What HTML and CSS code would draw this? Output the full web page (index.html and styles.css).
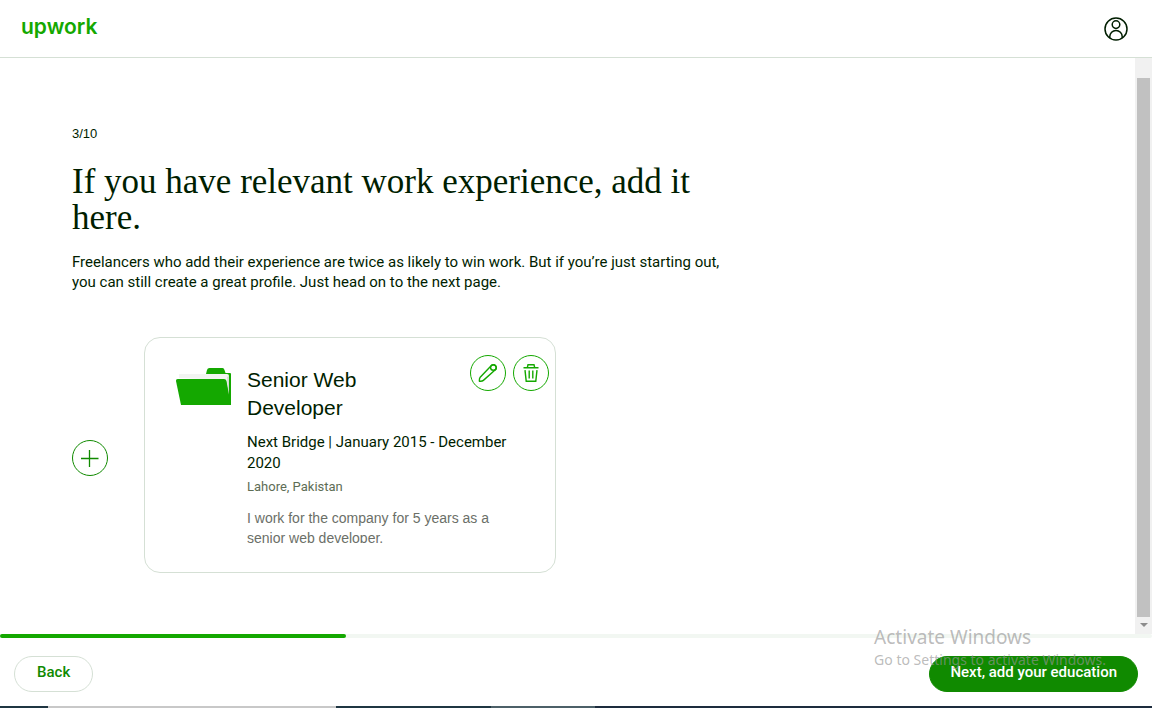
FILE: index.html
```html
<!DOCTYPE html>
<html lang="en">
<head>
<meta charset="utf-8">
<meta name="viewport" content="width=device-width, initial-scale=1">
<title>Work experience</title>
<link rel="stylesheet" href="styles.css">
</head>
<body>
<div class="app">
  <header class="topbar">
    <a class="logo" href="#">upwork</a>
    <button class="account" type="button" aria-label="Account">
      <svg viewBox="0 0 24 24" width="24" height="24" fill="none" stroke="currentColor" stroke-width="1.5">
        <circle cx="12" cy="12" r="11"/>
        <circle cx="12" cy="7.6" r="3.8"/>
        <path d="M5.8 20.8v-1.2a6.2 6.2 0 0 1 12.4 0v1.2"/>
      </svg>
    </button>
  </header>

  <div class="viewport">
    <main class="content">
      <p class="step">3/10</p>
      <h1 class="heading">If you have relevant work experience, add it here.</h1>
      <p class="intro">Freelancers who add their experience are twice as likely to win work. But if you’re just starting out, you can still create a great profile. Just head on to the next page.</p>

      <div class="experience">
        <button class="round add" type="button" aria-label="Add experience">
          <svg viewBox="0 0 18 18" width="18" height="18" stroke="currentColor" stroke-width="1.3"><path d="M8.500 1v17M0 9.500h17.500"/></svg>
        </button>
        <article class="card">
          <svg class="folder" viewBox="0 0 56 38" width="56" height="38">
            <path fill="#14a800" d="M30 6l1-4q.5-2 2.500-2h13q1.500 0 2 2l1 3h4.500q1 0 1 1v31H50z"/>
            <path fill="#f2f4f2" d="M3 6h48q2 0 2 2V31L50 12 3 10z"/>
            <path fill="#d5ddd5" d="M51 9l2-1v23z"/>
            <path fill="#14a800" d="M2 11h46q2 0 2.400 2L55 37H5L0 13q-.2-2 2-2z"/>
          </svg>
          <div class="details">
            <div class="card-head">
              <h2 class="title">Senior Web Developer</h2>
              <div class="actions">
                <button class="round" type="button" aria-label="Edit">
                  <svg viewBox="0 0 20 20" width="20" height="20" fill="none" stroke="currentColor" stroke-width="1.4" stroke-linejoin="round">
                    <path d="M2.200 14.200q-1 1.200-.8 4 2.600.4 4-.8L17.600 6.600a3 3 0 0 0-4.200-4.200z"/>
                    <circle cx="15.400" cy="4.500" r="2.800"/>
                  </svg>
                </button>
                <button class="round" type="button" aria-label="Delete">
                  <svg viewBox="0 0 20 20" width="20" height="20" fill="none" stroke="currentColor" stroke-width="1.4">
                    <path d="M2.500 4.700h15M6.300 4.700l.7-2.900h6l.7 2.900M4 7.200l1.200 11h9.600l1.200-11M8.200 7.500v8M11.800 7.500v8"/>
                  </svg>
                </button>
              </div>
            </div>
            <p class="meta">Next Bridge | January 2015 - December 2020</p>
            <p class="place">Lahore, Pakistan</p>
            <p class="summary">I work for the company for 5 years as a senior web developer.</p>
          </div>
        </article>
      </div>
    </main>
    <div class="scrollbar" aria-hidden="true">
      <div class="thumb"></div>
      <svg class="arrow" viewBox="0 0 8 4" width="8" height="4"><path fill="#8c8c8c" d="M0 0h8L4 4z"/></svg>
    </div>
  </div>

  <div class="progress" role="progressbar" aria-label="Progress" aria-valuemin="0" aria-valuemax="10" aria-valuenow="3">
    <div class="progress-fill" style="width:30%"></div>
  </div>

  <footer class="footer">
    <button class="pill back" type="button">Back</button>
    <button class="pill next" type="button">Next, add your education</button>
    <div class="watermark">
      <p class="watermark-title">Activate Windows</p>
      <p class="watermark-text">Go to Settings to activate Windows.</p>
    </div>
  </footer>
  <div class="taskbar"></div>
</div>
</body>
</html>
```

FILE: styles.css
```css
* { box-sizing: border-box; }

body {
  margin: 0;
  background: #fff;
  color: #001e00;
  font-family: Roboto, "Liberation Sans", sans-serif;
  font-size: 15px;
  line-height: 20px;
}

h1, h2, p { margin: 0; font-weight: 400; }

button { font: inherit; cursor: pointer; }

svg { display: block; flex: none; }

.app {
  display: flex;
  flex-direction: column;
  min-height: 100vh;
}

.topbar {
  display: flex;
  align-items: center;
  justify-content: space-between;
  height: 58px;
  padding: 0 24px 0 21px;
  border-bottom: 1px solid #d5e0d5;
}

.logo {
  padding-bottom: 3px;
  color: #14a800;
  font-family: Inter, "Liberation Sans", sans-serif;
  font-size: 21px;
  font-weight: 600;
  line-height: 24px;
  text-decoration: none;
}

.account {
  padding: 0;
  border: 0;
  background: none;
  color: #001e00;
}

.viewport { display: flex; flex: 1; }

.content {
  flex: 1;
  padding: 66px 72px 61px;
}

.step {
  font-family: "Liberation Sans", Arial, sans-serif;
  font-size: 13px;
}

.heading {
  max-width: 640px;
  margin: 20px 0 16px;
  font-family: "Liberation Serif", serif;
  font-size: 35px;
  line-height: 36px;
}

.intro { max-width: 656px; }

.experience {
  display: flex;
  align-items: flex-start;
  gap: 36px;
  margin-top: 45px;
}

.round {
  display: flex;
  align-items: center;
  justify-content: center;
  flex: none;
  width: 36px;
  height: 36px;
  padding: 0;
  border: 1px solid #14a800;
  border-radius: 50%;
  background: #fff;
  color: #14a800;
}

.add {
  margin-top: 103px;
  border-color: #108a00;
  color: #108a00;
}

.card {
  display: flex;
  gap: 15px;
  flex: 0 1 412px;
  padding: 17px 6px 29px 31px;
  border: 1px solid #d5e0d5;
  border-radius: 16px;
}

.folder { margin-top: 13px; }

.details { flex: 1; }

.card-head {
  display: flex;
  justify-content: space-between;
}

.title {
  max-width: 160px;
  padding-top: 11px;
  font-family: "Liberation Sans", Arial, sans-serif;
  font-size: 21px;
  line-height: 28px;
}

.actions { display: flex; gap: 7px; }

.meta {
  max-width: 272px;
  margin-top: 10px;
  line-height: 21px;
}

.place {
  margin-top: 3px;
  color: #5e6d55;
  font-size: 13px;
}

.summary {
  max-width: 260px;
  height: 35px;
  margin-top: 11px;
  overflow: hidden;
  color: #6b6f68;
  font-family: "Liberation Sans", Arial, sans-serif;
  font-size: 14px;
}

.scrollbar {
  display: flex;
  flex-direction: column;
  align-items: center;
  justify-content: space-between;
  width: 17px;
  padding: 20px 0 7px;
  background: #f1f1f1;
}

.thumb {
  flex: 1;
  width: 13px;
  margin-bottom: 6px;
  background: #c1c1c1;
}

.progress {
  height: 4px;
  border-radius: 2px;
  background: #f2f7f2;
}

.progress-fill {
  height: 100%;
  border-radius: 2px;
  background: #14a800;
}

.footer {
  position: relative;
  display: flex;
  justify-content: space-between;
  padding: 18px 14px 14px;
}

.pill {
  height: 36px;
  padding: 0 22px 4px;
  border: 1px solid #d5e0d5;
  border-radius: 18px;
  background: #fff;
  color: #108a00;
  font-weight: 500;
}

.next {
  padding: 0 20px 4px;
  border-color: #108a00;
  background: #108a00;
  color: #fff;
}

.watermark {
  position: absolute;
  right: 46px;
  bottom: 36px;
  color: rgba(150, 150, 150, 0.65);
  font-family: "Noto Sans", "Open Sans", sans-serif;
  pointer-events: none;
}

.watermark-title {
  font-size: 19px;
  line-height: 26px;
}

.watermark-text { font-size: 14px; }

.taskbar {
  height: 2px;
  background: linear-gradient(90deg, #1f3642 48px, #c8c8c8 48px 336px, #1f3642 336px 491px, #4c6068 491px 595px, #1d2c3d 595px);
}
```
